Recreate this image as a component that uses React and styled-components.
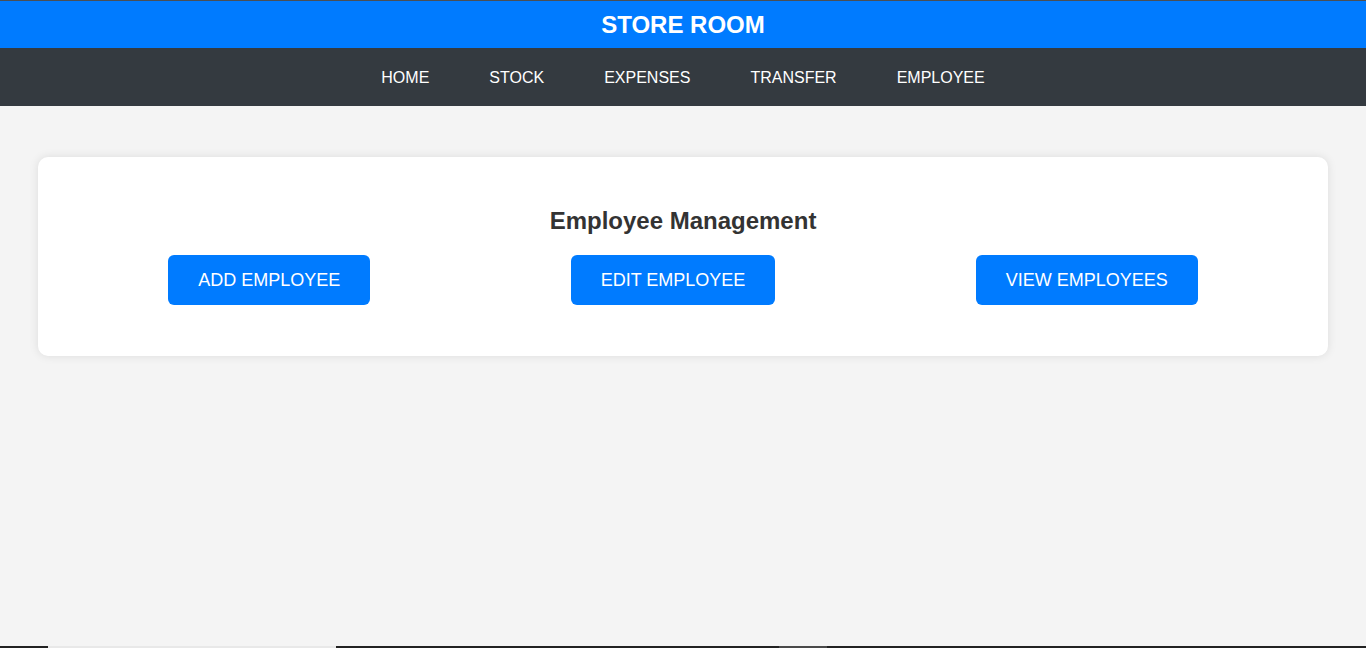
import React from "react";
import styled, { createGlobalStyle } from "styled-components";

const GlobalStyle = createGlobalStyle`
  html, body {
    margin: 0;
    padding: 0;
    background: #f4f4f4;
    font-family: "Liberation Sans", Arial, sans-serif;
  }
  * { box-sizing: border-box; }
`;

const Page = styled.div`
  min-height: 648px;
  background: #f4f4f4;
  border-top: 1px solid #4a4f55;
`;

const Header = styled.header`
  background: #007bff;
  color: #fff;
  text-align: center;
  padding: 10px 0 9px;
`;

const Title = styled.h1`
  margin: 0;
  font-size: 24px;
  line-height: 28px;
  font-weight: bold;
`;

const Nav = styled.nav`
  background: #343a40;
  height: 58px;
  padding-top: 2px;
  display: flex;
  justify-content: center;
  align-items: center;
`;

const NavLink = styled.a`
  color: #fff;
  text-decoration: none;
  font-size: 16px;
  padding: 0 30px;
  line-height: 18px;
  cursor: pointer;
`;

const Main = styled.main`
  padding: 51px 38px 0;
`;

const Card = styled.section`
  background: #fff;
  border-radius: 10px;
  box-shadow: 0 0 10px rgba(0, 0, 0, 0.1);
  padding: 30px 30px 51px;
  text-align: center;
`;

const CardTitle = styled.h2`
  margin: 20px 0 20px;
  font-size: 24px;
  line-height: 28px;
  font-weight: bold;
  color: #333;
`;

const ButtonRow = styled.div`
  display: flex;
  justify-content: space-around;
`;

const ActionButton = styled.button`
  background: #007bff;
  color: #fff;
  border: none;
  border-radius: 6px;
  height: 50px;
  padding: 0 30px;
  font-family: "Liberation Sans", Arial, sans-serif;
  font-size: 18px;
  cursor: pointer;
`;

const Taskbar = styled.div`
  position: fixed;
  left: 0;
  right: 0;
  bottom: 0;
  height: 2px;
  background: #222;
`;

const TaskSeg = styled.span`
  position: absolute;
  top: 0;
  height: 2px;
  left: ${(p) => p.$left}px;
  width: ${(p) => p.$width}px;
  background: ${(p) => p.$color};
`;

const links = ["HOME", "STOCK", "EXPENSES", "TRANSFER", "EMPLOYEE"];
const actions = ["ADD EMPLOYEE", "EDIT EMPLOYEE", "VIEW EMPLOYEES"];

export default function App() {
  return (
    <>
      <GlobalStyle />
      <Page>
        <Header>
          <Title>STORE ROOM</Title>
        </Header>
        <Nav>
          {links.map((l) => (
            <NavLink key={l}>{l}</NavLink>
          ))}
        </Nav>
        <Main>
          <Card>
            <CardTitle>Employee Management</CardTitle>
            <ButtonRow>
              {actions.map((a) => (
                <ActionButton key={a}>{a}</ActionButton>
              ))}
            </ButtonRow>
          </Card>
        </Main>
      </Page>
      <Taskbar>
        <TaskSeg $left={48} $width={288} $color="#e8e8e8" />
        <TaskSeg $left={779} $width={48} $color="#4a4a4a" />
      </Taskbar>
    </>
  );
}
